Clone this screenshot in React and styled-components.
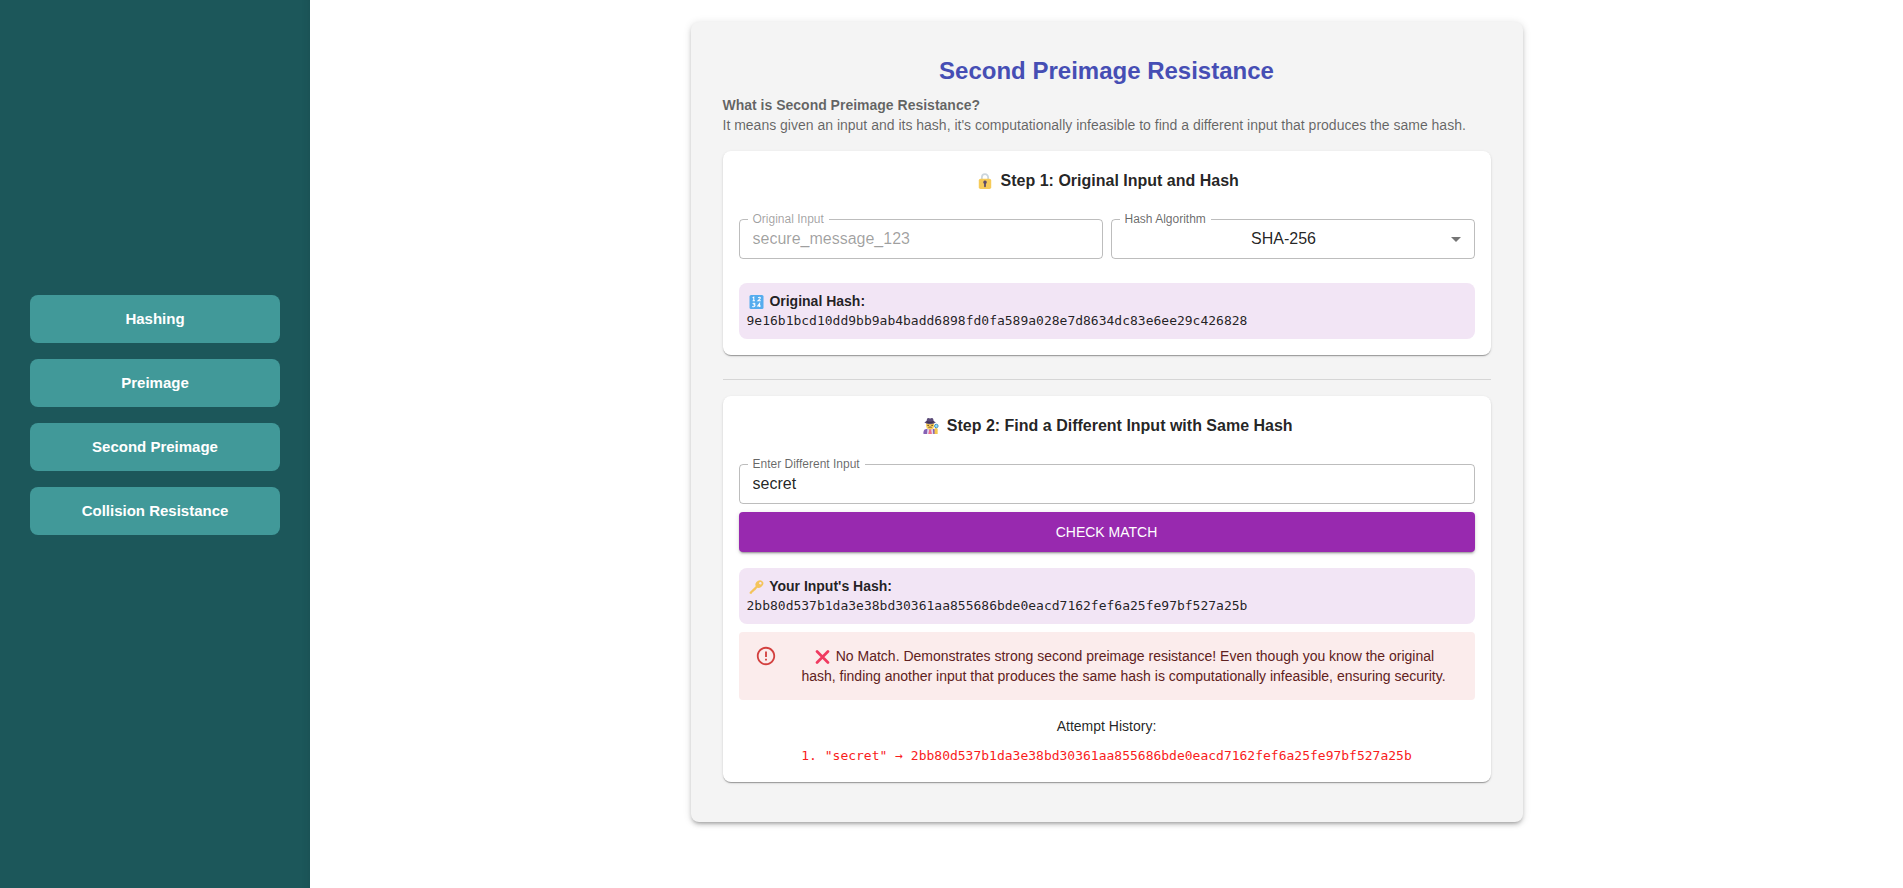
import React, { useState } from "react";
import styled, { createGlobalStyle } from "styled-components";

const GlobalStyle = createGlobalStyle`
  *, *::before, *::after { box-sizing: border-box; }
  body {
    margin: 0;
    background: #fff;
    color: rgba(0, 0, 0, 0.87);
    font-family: "Liberation Sans", Arial, sans-serif;
    font-size: 14px;
    line-height: 20px;
  }
`;

const Page = styled.div`
  display: flex;
  min-height: 100vh;
`;

const Sidebar = styled.nav`
  display: flex;
  flex-direction: column;
  justify-content: center;
  gap: 16px;
  flex: 0 0 310px;
  padding: 0 30px 58px;
  background: #1c575a;
  box-shadow: inset -10px 0 10px -10px rgba(0, 0, 0, 0.1);
`;

const NavButton = styled.button`
  height: 48px;
  border: 0;
  border-radius: 8px;
  background: #419999;
  color: #fff;
  font: bold 15px/20px "Liberation Sans", Arial, sans-serif;
  cursor: pointer;
`;

const Main = styled.main`
  flex: 1;
  display: flex;
  justify-content: center;
  align-items: flex-start;
  padding: 22px 24px;
`;

const Panel = styled.section`
  width: 100%;
  max-width: 832px;
  padding: 32px 32px 40px;
  border-radius: 8px;
  background: #f4f4f4;
  box-shadow: 0 3px 3px -2px rgba(0, 0, 0, 0.2), 0 3px 4px rgba(0, 0, 0, 0.14),
    0 1px 8px rgba(0, 0, 0, 0.12);
`;

const Title = styled.h1`
  margin: 0 0 7px;
  color: #464eb4;
  font-size: 24px;
  line-height: 34px;
  text-align: center;
`;

const Intro = styled.p`
  margin: 0 0 16px;
  color: rgba(0, 0, 0, 0.6);
`;

const Card = styled.section`
  padding: 16px;
  border-radius: 8px;
  background: #fff;
  box-shadow: 0 2px 1px -1px rgba(0, 0, 0, 0.2), 0 1px 1px rgba(0, 0, 0, 0.14),
    0 1px 3px rgba(0, 0, 0, 0.12);
`;

const StepTitle = styled.h2`
  margin: 0 0 24px;
  font-size: 16px;
  line-height: 28px;
  text-align: center;
`;

const Divider = styled.hr`
  height: 1px;
  margin: 24px 0 16px;
  border: 0;
  background: rgba(0, 0, 0, 0.12);
`;

const FieldRow = styled.div`
  display: grid;
  grid-template-columns: 1fr 1fr;
  gap: 8px;
  margin-bottom: 24px;
`;

const Field = styled.div`
  position: relative;
  display: flex;
  height: 40px;
  border: 1px solid rgba(0, 0, 0, 0.26);
  border-radius: 4px;
`;

const FieldLabel = styled.label`
  position: absolute;
  top: -11px;
  left: 8px;
  padding: 0 5px;
  background: #fff;
  color: ${(p) => (p.$muted ? "rgba(0, 0, 0, 0.38)" : "rgba(0, 0, 0, 0.6)")};
  font-size: 12px;
`;

const TextInput = styled.input`
  flex: 1;
  min-width: 0;
  padding: 0 13px;
  border: 0;
  outline: 0;
  background: none;
  color: rgba(0, 0, 0, 0.87);
  font: 16px "Liberation Sans", Arial, sans-serif;
  &:disabled { color: rgba(0, 0, 0, 0.38); }
`;

const Select = styled.select`
  flex: 1;
  min-width: 0;
  padding: 0 31px 1px 13px;
  border: 0;
  outline: 0;
  appearance: none;
  background: none;
  color: rgba(0, 0, 0, 0.87);
  font: 16px "Liberation Sans", Arial, sans-serif;
  text-align: center;
  text-align-last: center;
`;

const SelectArrow = styled.svg`
  position: absolute;
  top: 7px;
  right: 6px;
  width: 24px;
  height: 24px;
  fill: rgba(0, 0, 0, 0.54);
  pointer-events: none;
`;

const CheckButton = styled.button`
  display: block;
  width: 100%;
  height: 40px;
  margin: 8px 0 16px;
  border: 0;
  border-radius: 4px;
  background: #9829af;
  color: #fff;
  font: 14px "Liberation Sans", Arial, sans-serif;
  text-transform: uppercase;
  cursor: pointer;
  box-shadow: 0 3px 1px -2px rgba(0, 0, 0, 0.2), 0 2px 2px rgba(0, 0, 0, 0.14),
    0 1px 5px rgba(0, 0, 0, 0.12);
`;

const HashBox = styled.div`
  padding: 8px;
  border-radius: 8px;
  background: #f2e5f5;
`;

const HashValue = styled.div`
  font: 13px/20px "DejaVu Sans Mono", monospace;
  overflow-wrap: anywhere;
`;

const Alert = styled.div`
  display: flex;
  gap: 12px;
  margin: 8px 0 16px;
  padding: 14px 16px;
  border-radius: 4px;
  background: #fbecec;
  color: #5f2120;
`;

const AlertIcon = styled.svg`
  flex: none;
  width: 22px;
  height: 22px;
  margin-top: -1px;
  fill: #d3403f;
`;

const AlertMessage = styled.p`
  flex: 1;
  margin: 0;
  padding: 0 8px;
  text-align: center;
`;

const HistoryTitle = styled.h3`
  margin: 0 0 10px;
  font-size: 14px;
  font-weight: normal;
  text-align: center;
`;

const HistoryItem = styled.div`
  color: #f91c1c;
  font: 13px/20px "DejaVu Sans Mono", monospace;
  text-align: center;
  overflow-wrap: anywhere;
`;

const Glyph = styled.svg`
  width: ${(p) => (p.$large ? 22 : 19)}px;
  height: ${(p) => (p.$large ? 16 : 14)}px;
  vertical-align: -3px;
`;

const LockIcon = () => (
  <Glyph $large viewBox="0 0 36 36" aria-hidden="true">
    <path d="M11 18V9.500a7 7 0 0 1 14 0V18" fill="none" stroke="#ccd6dd" strokeWidth="4" />
    <rect x="4" y="13" width="28" height="23" rx="4" fill="#f6cb5a" />
    <path d="M22 21a4 4 0 1 0-6 3.400V30a2 2 0 0 0 4 0v-5.600A4 4 0 0 0 22 21z" fill="#5c4b68" />
  </Glyph>
);

const NumbersIcon = () => (
  <Glyph viewBox="0 0 36 36" aria-hidden="true">
    <rect width="36" height="36" rx="4" fill="#55acee" />
    <g fill="none" stroke="#fff" strokeWidth="2.600">
      <path d="M8 7l3-1.500V15M8 15h6M22 7q6-3 6 1 0 2-6 6.500h7" />
      <path d="M8 22q6-2 6 1 0 2-4 2 5 0 4 3-1 3-7 1.500M26 31v-9l-5 6.500h8" />
    </g>
  </Glyph>
);

const DetectiveIcon = () => (
  <Glyph $large viewBox="0 0 36 36" aria-hidden="true">
    <path d="M1 36v-4q0-7 8-8h14q8 1 8 8v4z" fill="#8561b5" />
    <path d="M10 23l6 4 6-4 1 13H9z" fill="#e1d8ed" />
    <path d="M14 26h4l2 10h-8z" fill="#ee7089" />
    <path d="M7 10h18v8q-1 8-9 8t-9-8z" fill="#fbd05b" />
    <path d="M10 15h3v3h-3zm9 0h3v3h-3z" fill="#66471b" />
    <path d="M11 20q5-2 10 0l-2 2q-3-1-6 0z" fill="#7d5740" />
    <path d="M3 10q4-2 5-3l1-5q1-3 7-1 6-2 7 1l1 5q1 1 5 3-6 4-13 4T3 10z" fill="#5b4b78" />
    <path d="M8 7q8 3 16 0v3q-8 3-16 0z" fill="#40324f" />
    <path d="M29 22l4 2v12h-7V24z" fill="#f5c84c" />
    <circle cx="30" cy="18" r="4" fill="#8ee0fa" stroke="#3b83b5" strokeWidth="2" />
  </Glyph>
);

const KeyIcon = () => (
  <Glyph viewBox="0 0 36 36" aria-hidden="true">
    <path
      fillRule="evenodd"
      d="M33 3Q28-1 22 2q-5 2-7 8 0 4 1 6L1 31q-2 2 0 4 3 2 5 0l1-3 3-1 1-3 3-1 6-7q6 1 10-2 6-4 6-10 0-3-3-5zm-2 5a3 3 0 1 1-5-2 3 3 0 0 1 5 2z"
      fill="#f4c45b"
    />
  </Glyph>
);

const CrossIcon = () => (
  <Glyph viewBox="0 0 36 36" aria-hidden="true">
    <path d="M4 4l28 28M32 4L4 32" fill="none" stroke="#f03a60" strokeWidth="7" strokeLinecap="round" />
  </Glyph>
);

const PAGES = ["Hashing", "Preimage", "Second Preimage", "Collision Resistance"];
const ORIGINAL_HASH = "9e16b1bcd10dd9bb9ab4badd6898fd0fa589a028e7d8634dc83e6ee29c426828";
const ATTEMPT_HASH = "2bb80d537b1da3e38bd30361aa855686bde0eacd7162fef6a25fe97bf527a25b";

export default function App() {
  const [attempt, setAttempt] = useState("secret");

  return (
    <>
      <GlobalStyle />
      <Page>
        <Sidebar>
          {PAGES.map((name) => (
            <NavButton key={name} type="button">{name}</NavButton>
          ))}
        </Sidebar>
        <Main>
          <Panel>
            <Title>Second Preimage Resistance</Title>
            <Intro>
              <strong>What is Second Preimage Resistance?</strong>
              <br />
              It means given an input and its hash, it's computationally infeasible to find a
              different input that produces the same hash.
            </Intro>

            <Card>
              <StepTitle><LockIcon /> Step 1: Original Input and Hash</StepTitle>
              <FieldRow>
                <Field>
                  <FieldLabel htmlFor="original" $muted>Original Input</FieldLabel>
                  <TextInput id="original" type="text" value="secure_message_123" disabled />
                </Field>
                <Field>
                  <FieldLabel htmlFor="algorithm">Hash Algorithm</FieldLabel>
                  <Select id="algorithm" defaultValue="SHA-256">
                    <option>SHA-256</option>
                  </Select>
                  <SelectArrow viewBox="0 0 24 24" aria-hidden="true">
                    <path d="M7 10l5 5 5-5z" />
                  </SelectArrow>
                </Field>
              </FieldRow>
              <HashBox>
                <strong><NumbersIcon /> Original Hash:</strong>
                <HashValue>{ORIGINAL_HASH}</HashValue>
              </HashBox>
            </Card>

            <Divider />

            <Card>
              <StepTitle><DetectiveIcon /> Step 2: Find a Different Input with Same Hash</StepTitle>
              <Field>
                <FieldLabel htmlFor="attempt">Enter Different Input</FieldLabel>
                <TextInput
                  id="attempt"
                  type="text"
                  value={attempt}
                  onChange={(e) => setAttempt(e.target.value)}
                />
              </Field>
              <CheckButton type="button">Check Match</CheckButton>
              <HashBox>
                <strong><KeyIcon /> Your Input's Hash:</strong>
                <HashValue>{ATTEMPT_HASH}</HashValue>
              </HashBox>
              <Alert role="alert">
                <AlertIcon viewBox="0 0 24 24" aria-hidden="true">
                  <path d="M11 15h2v2h-2zm0-8h2v6h-2zm.99-5C6.470 2 2 6.480 2 12s4.470 10 9.990 10C17.520 22 22 17.520 22 12S17.520 2 11.990 2zM12 20c-4.420 0-8-3.580-8-8s3.580-8 8-8 8 3.580 8 8-3.580 8-8 8z" />
                </AlertIcon>
                <AlertMessage>
                  <CrossIcon /> No Match. Demonstrates strong second preimage resistance! Even
                  though you know the original hash, finding another input that produces the same
                  hash is computationally infeasible, ensuring security.
                </AlertMessage>
              </Alert>
              <HistoryTitle>Attempt History:</HistoryTitle>
              <HistoryItem>1. "secret" → {ATTEMPT_HASH}</HistoryItem>
            </Card>
          </Panel>
        </Main>
      </Page>
    </>
  );
}
